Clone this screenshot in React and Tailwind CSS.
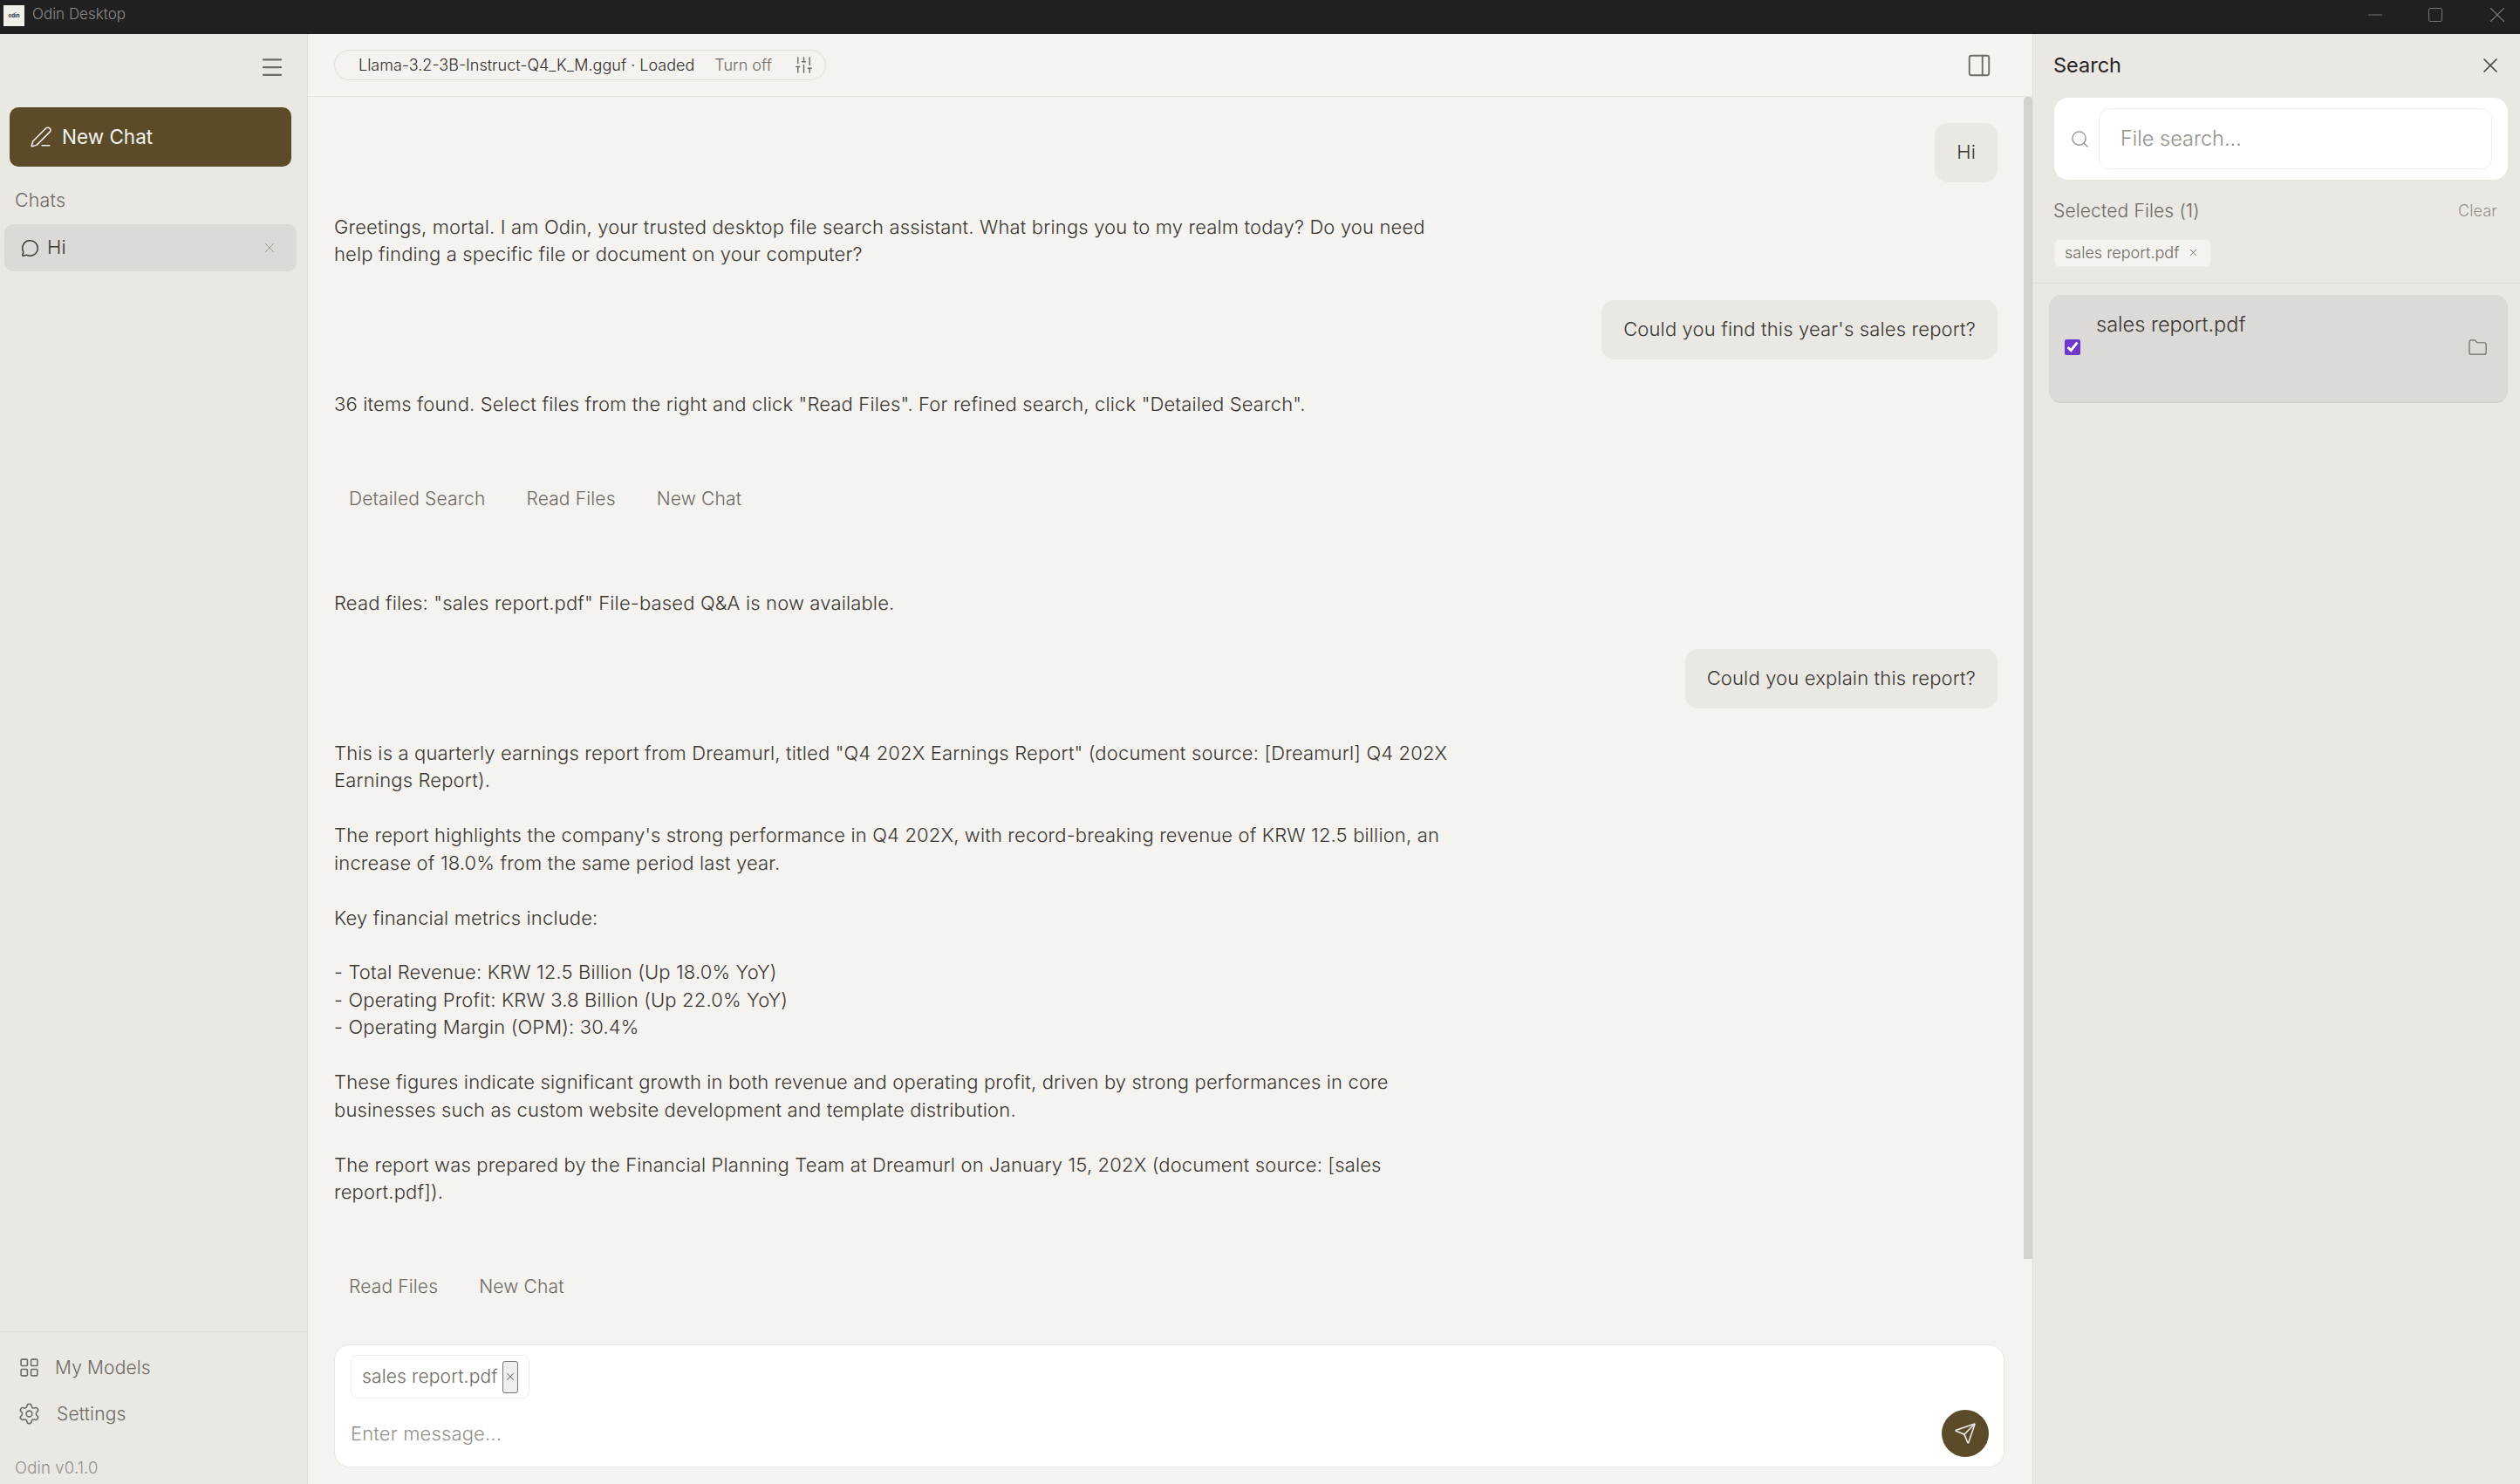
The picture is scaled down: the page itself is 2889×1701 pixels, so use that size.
import React from "react";
import {
  Menu, PenLine, MessageCircle, X, PanelRight, Search, Folder, LayoutGrid,
  Settings, Send, SlidersVertical, Minus, Square,
} from "lucide-react";

const report = [
  `This is a quarterly earnings report from Dreamurl, titled "Q4 202X Earnings Report" (document source: [Dreamurl] Q4 202X Earnings Report).`,
  `The report highlights the company's strong performance in Q4 202X, with record-breaking revenue of KRW 12.5 billion, an increase of 18.0% from the same period last year.`,
  `Key financial metrics include:`,
  `- Total Revenue: KRW 12.5 Billion (Up 18.0% YoY)\n- Operating Profit: KRW 3.8 Billion (Up 22.0% YoY)\n- Operating Margin (OPM): 30.4%`,
  `These figures indicate significant growth in both revenue and operating profit, driven by strong performances in core businesses such as custom website development and template distribution.`,
  `The report was prepared by the Financial Planning Team at Dreamurl on January 15, 202X (document source: [sales report.pdf]).`,
];

function UserBubble({ children }) {
  return (
    <div className="flex justify-end">
      <div className="h-[68px] flex items-center px-[25px] rounded-[15px] bg-[#e9e8e2] text-[#3a3733]">{children}</div>
    </div>
  );
}

function Reply({ children }) {
  return <div className="w-[1295px] mt-[36px] mb-[36px] text-[#3a3733]">{children}</div>;
}

function Actions({ items }) {
  return (
    <div className="flex h-[58px] mt-[-36px] mb-[76px] pt-[63px] box-content gap-[47px] pl-[17px] items-center text-[21px] text-[#6f6a64]">
      {items.map((t) => <span key={t}>{t}</span>)}
    </div>
  );
}

export default function App() {
  return (
    <div className="h-[1701px] w-[2889px] flex flex-col overflow-hidden font-['Inter',sans-serif] font-light text-[22px] leading-[31.45px] tracking-[0.15px] bg-[#f4f3ef]">
      <div className="h-[39px] shrink-0 bg-[#202020] flex items-center pb-[6px] text-[#8b8b8b]">
        <div className="w-[24px] h-[24px] mt-[2px] ml-[4px] bg-[#f0efe9] flex items-center justify-center text-[6px] leading-none font-bold text-[#1b2a3a] tracking-normal">odin</div>
        <span className="ml-[9px] text-[17px] tracking-normal">Odin Desktop</span>
        <div className="ml-auto flex items-center text-[#777777]">
          <Minus size={26} strokeWidth={0.9} className="mr-[46px]" />
          <Square size={20} strokeWidth={1.2} className="mr-[46px]" />
          <X size={30} strokeWidth={0.9} className="mr-[11px]" />
        </div>
      </div>

      <div className="flex-1 flex min-h-0">
        <aside className="w-[353px] shrink-0 bg-[#e9e8e3] border-r border-[#dfded9] flex flex-col">
          <div className="h-[71px] flex items-center justify-end pr-[25px] pt-[4px] text-[#6f6a64]">
            <Menu size={30} strokeWidth={1.8} />
          </div>
          <div className="ml-[11px] mr-[18px] mt-[13px] h-[68px] rounded-[10px] bg-[#5c4b29] text-[#f4f3ef] font-normal text-[22.5px] tracking-normal flex items-center pl-[23px] gap-[11px]">
            <PenLine size={26} strokeWidth={1.4} />
            <span>New Chat</span>
          </div>
          <div className="mt-[23px] ml-[17px] h-[32px] flex items-center text-[21.5px] text-[#6f6a64]">Chats</div>
          <div className="ml-[5px] mr-[12px] mt-[11px] h-[54px] rounded-[10px] bg-[#dbdad6] flex items-center pl-[19px] text-[#3a3733]">
            <MessageCircle size={21} strokeWidth={1.7} />
            <span className="ml-[9px]">Hi</span>
            <X size={18} strokeWidth={1.1} className="ml-auto mr-[22px] text-[#8d8a85]" />
          </div>
          <div className="mt-auto border-t border-[#dfded9] pb-[3px] text-[21px] text-[#6f6a64]">
            <div className="h-[53px] mt-[14px] flex items-center pl-[21px] gap-[17px]">
              <LayoutGrid size={25} strokeWidth={1.5} />
              <span>My Models</span>
            </div>
            <div className="h-[53px] flex items-center pl-[20px] gap-[18px]">
              <Settings size={27} strokeWidth={1.4} />
              <span>Settings</span>
            </div>
            <div className="mt-[21px] h-[30px] pl-[17px] text-[18.5px] flex items-center text-[#94908a]">Odin v0.1.0</div>
          </div>
        </aside>

        <main className="relative flex-1 min-w-0 flex flex-col">
          <div className="h-[72px] shrink-0 border-b border-[#e5e4df] flex items-center pl-[30px] pr-[46px]">
            <div className="h-[35px] flex items-center rounded-full border border-[#e0dfda] pl-[27px] pr-[13px] text-[18px] tracking-normal text-[#2f2c2a]">
              <span>Llama-3.2-3B-Instruct-Q4_K_M.gguf · Loaded</span>
              <span className="ml-[23px] text-[#6f6a64]">Turn off</span>
              <SlidersVertical size={23} strokeWidth={1.5} className="ml-[25px] text-[#6f6a64]" />
            </div>
            <PanelRight size={30} strokeWidth={1.5} className="ml-auto text-[#6f6a64]" />
          </div>

          <div className="absolute right-0 top-[72px] w-[10px] h-[1332px] rounded-t-[4px] bg-[#d3d2ce]" />

          <div className="flex-1 min-h-0 overflow-hidden pl-[30px] pr-[40px] pt-[30px]">
            <UserBubble>Hi</UserBubble>
            <Reply>Greetings, mortal. I am Odin, your trusted desktop file search assistant. What brings you to my realm today? Do you need help finding a specific file or document on your computer?</Reply>
            <UserBubble>Could you find this year's sales report?</UserBubble>
            <Reply>36 items found. Select files from the right and click "Read Files". For refined search, click "Detailed Search".</Reply>
            <Actions items={["Detailed Search", "Read Files", "New Chat"]} />
            <Reply>Read files: "sales report.pdf" File-based Q&A is now available.</Reply>
            <UserBubble>Could you explain this report?</UserBubble>
            <Reply>
              {report.map((p, i) => (
                <p key={i} className={`whitespace-pre-line ${i ? "mt-[31.45px]" : ""}`}>{p}</p>
              ))}
            </Reply>
            <Actions items={["Read Files", "New Chat"]} />
          </div>

          <div className="shrink-0 pl-[30px] pr-[32px] pb-[19px]">
            <div className="relative h-[141px] rounded-[18px] bg-white border border-[#e8e7e3] pl-[18px] pt-[11px]">
              <div className="inline-flex h-[50px] items-center rounded-[8px] border border-[#eeeeea] pl-[12px] pr-[12px] text-[21px] text-[#6f6a64]">
                <span>sales report.pdf</span>
                <span className="ml-[5px] w-[18px] h-[37px] rounded-[3px] border border-[#77736d] bg-[#efefef] flex items-center justify-center">
                  <X size={14} strokeWidth={1.8} />
                </span>
              </div>
              <div className="mt-[25px] leading-[31px] text-[#94908a]">Enter message...</div>
              <div className="absolute right-[17px] bottom-[11px] w-[54px] h-[54px] rounded-full bg-[#5c4b29] flex items-center justify-center text-[#f4f3ef]">
                <Send size={26} strokeWidth={1.4} />
              </div>
            </div>
          </div>
        </main>

        <aside className="w-[559px] shrink-0 bg-[#e9e8e3] border-l border-[#dfded9] flex flex-col">
          <div className="h-[71px] flex items-center pl-[23px] pr-[20px] text-[#26231f] font-normal text-[23.5px] tracking-normal">
            <span>Search</span>
            <X size={28} strokeWidth={1.5} className="ml-auto text-[#4b4743]" />
          </div>
          <div className="ml-[24px] mr-[14px] mt-[2px] h-[94px] rounded-[16px] bg-white flex items-center pl-[18px] pr-[18px] gap-[10px]">
            <Search size={23} strokeWidth={1.4} className="text-[#94908a] shrink-0" />
            <div className="flex-1 h-[70px] rounded-[12px] border border-[#eeeeea] flex items-center pl-[24px] text-[#94908a] text-[23.5px] tracking-normal">File search...</div>
          </div>
          <div className="mt-[20px] ml-[23px] mr-[26px] h-[32px] flex items-center text-[21px] text-[#6f6a64]">
            <span>Selected Files (1)</span>
            <span className="ml-auto text-[18px] text-[#94908a]">Clear</span>
          </div>
          <div className="border-b border-[#dfded9] h-[67px] pl-[24px] pt-[15px]">
            <div className="inline-flex items-center h-[32px] rounded-[6px] bg-[#f4f3ef] border border-[#eeede9] pl-[11px] pr-[13px] text-[18px] tracking-normal text-[#6f6a64]">
              <span>sales report.pdf</span>
              <X size={13} strokeWidth={1.6} className="ml-[10px]" />
            </div>
          </div>
          <div className="ml-[18px] mr-[14px] mt-[13px] h-[124px] rounded-[14px] bg-[#dbdad6] border-b border-[#cfceca] flex items-start pl-[18px] pr-[23px] text-[#3a3733]">
            <input type="checkbox" checked readOnly className="mt-[51px] w-[18px] h-[18px] shrink-0 accent-[#6d38cb]" />
            <span className="ml-[18px] mt-[18px] text-[23.5px] tracking-normal">sales report.pdf</span>
            <Folder size={23} strokeWidth={1.3} className="ml-auto mt-[49px] text-[#6f6a64]" />
          </div>
        </aside>
      </div>
    </div>
  );
}
